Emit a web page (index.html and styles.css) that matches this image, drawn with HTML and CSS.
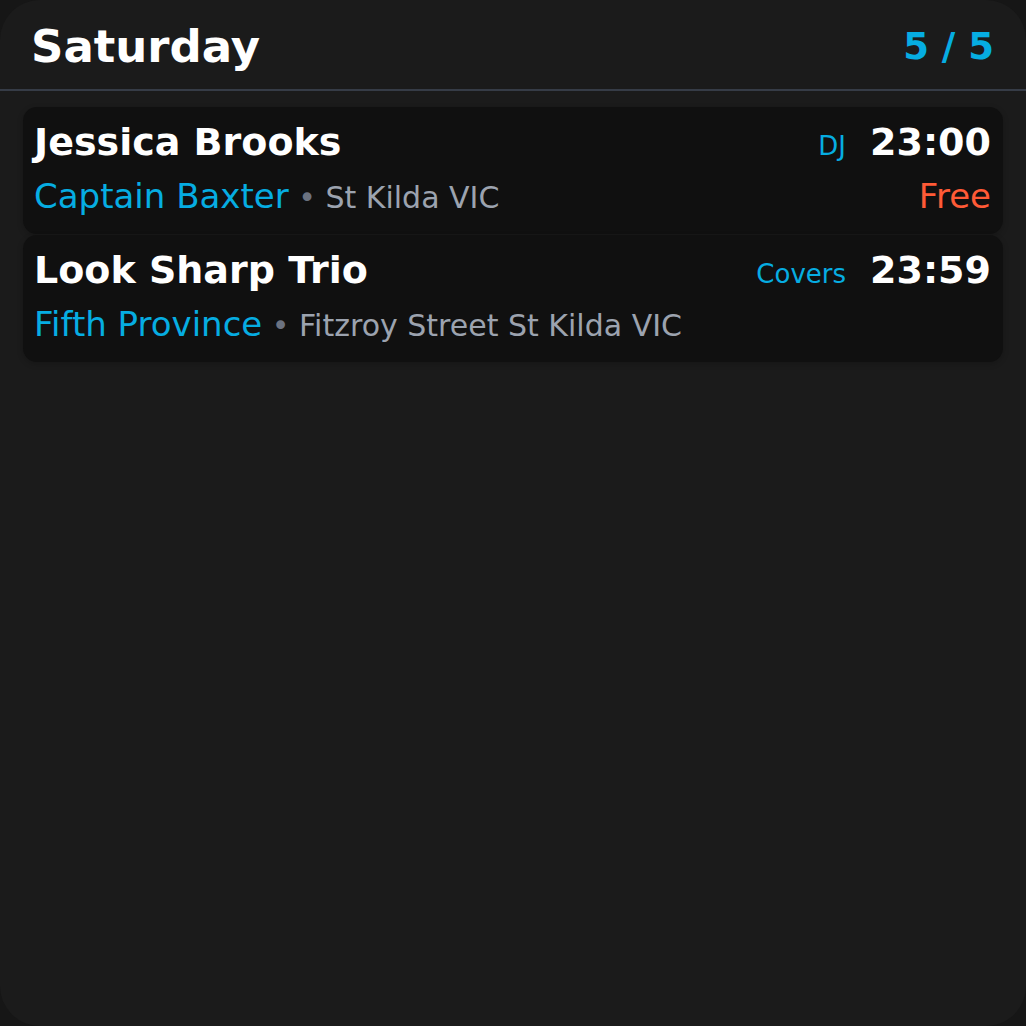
FILE: index.html
```html
<!DOCTYPE html>
<html>
<head>
<meta charset="utf-8">
<link rel="stylesheet" href="styles.css">
</head>
<body>
<div class="panel">
  <header class="header">
    <h1 class="day">Saturday</h1>
    <div class="count">5 / 5</div>
  </header>
  <div class="list">
    <div class="card">
      <div class="row">
        <div class="title">Jessica Brooks</div>
        <div class="right">
          <span class="genre">DJ</span>
          <span class="time">23:00</span>
        </div>
      </div>
      <div class="row row2">
        <div class="venue"><span class="vname">Captain Baxter</span><span class="dot"> • </span><span class="loc">St Kilda VIC</span></div>
        <div class="price">Free</div>
      </div>
    </div>
    <div class="card">
      <div class="row">
        <div class="title">Look Sharp Trio</div>
        <div class="right">
          <span class="genre">Covers</span>
          <span class="time">23:59</span>
        </div>
      </div>
      <div class="row row2">
        <div class="venue"><span class="vname">Fifth Province</span><span class="dot"> • </span><span class="loc">Fitzroy Street St Kilda VIC</span></div>
        <div class="price"></div>
      </div>
    </div>
  </div>
</div>
</body>
</html>
```
FILE: styles.css
```css
html, body {
  margin: 0;
  padding: 0;
  background: #161616;
}
body {
  font-family: "DejaVu Sans", sans-serif;
  width: 1026px;
  height: 1026px;
  overflow: hidden;
}
.panel {
  width: 1026px;
  height: 1026px;
  background: #1b1b1b;
  border-radius: 40px;
  box-sizing: border-box;
  overflow: hidden;
}
.header {
  display: flex;
  align-items: center;
  justify-content: space-between;
  padding: 21px 32px 17px 31px;
  border-bottom: 2px solid #363c47;
}
.day {
  margin: 0;
  font-size: 45px;
  font-weight: bold;
  color: #ffffff;
  line-height: 51px;
}
.count {
  font-size: 37px;
  font-weight: bold;
  color: #06ade2;
  line-height: 42px;
}
.list {
  display: flex;
  flex-direction: column;
  gap: 1px;
  padding: 16px 23px;
}
.card {
  background: #101010;
  border-radius: 14px;
  padding: 13px 12px 16px 11px;
  box-shadow: 0 2px 6px rgba(0,0,0,0.2);
}
.row {
  display: flex;
  align-items: baseline;
  justify-content: space-between;
}
.row2 {
  margin-top: 12px;
}
.title {
  font-size: 38px;
  font-weight: bold;
  color: #ffffff;
  line-height: 44px;
}
.right {
  display: flex;
  align-items: baseline;
  gap: 24px;
}
.genre {
  font-size: 26px;
  color: #06ade2;
}
.time {
  font-size: 38px;
  font-weight: bold;
  color: #ffffff;
  line-height: 44px;
}
.venue {
  font-size: 34px;
  line-height: 40px;
  white-space: nowrap;
}
.vname {
  color: #06ade2;
}
.dot {
  color: #6b7280;
  font-size: 30px;
}
.loc {
  color: #9ca3af;
  font-size: 30px;
}
.price {
  font-size: 34px;
  line-height: 40px;
  color: #ff5a36;
}
```
